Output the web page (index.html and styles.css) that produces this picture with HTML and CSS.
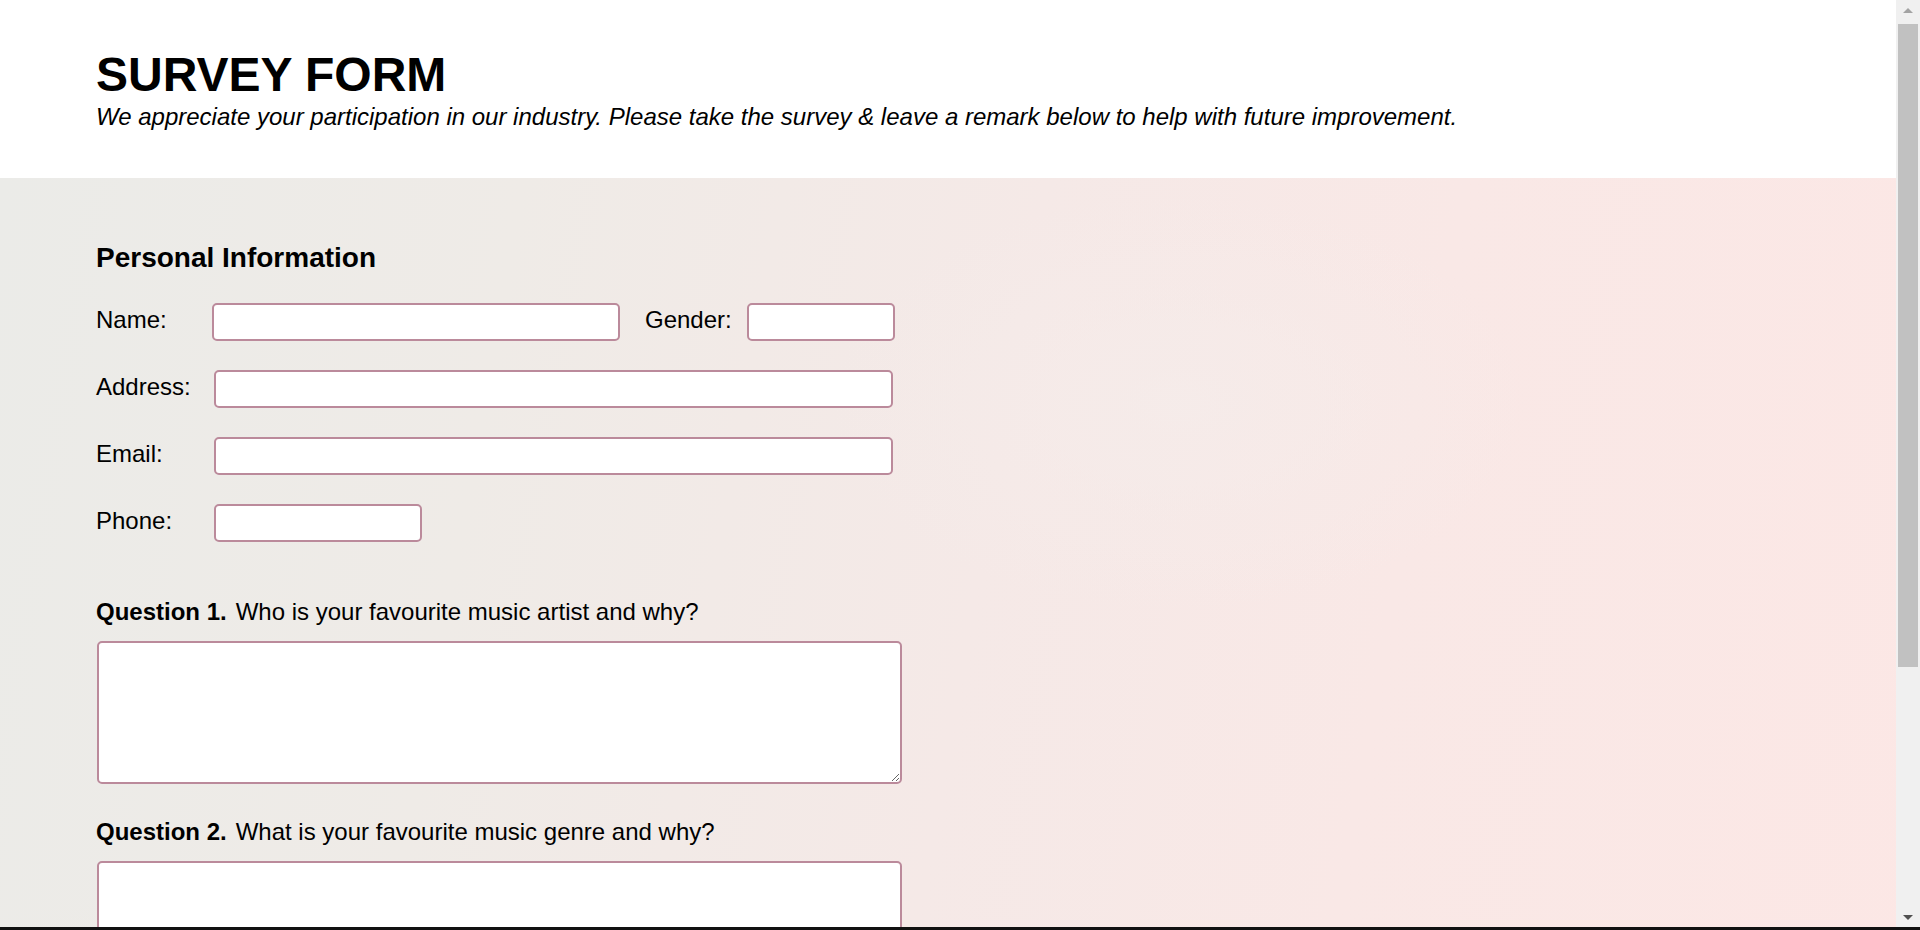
FILE: index.html
```html
<!DOCTYPE html>
<html lang="en">
<head>
<meta charset="utf-8">
<title>Survey Form</title>
<link rel="stylesheet" href="styles.css">
</head>
<body>
<header class="page-header">
  <h1 class="title">SURVEY FORM</h1>
  <p class="subtitle">We appreciate your participation in our industry. Please take the survey &amp; leave a remark below to help with future improvement.</p>
</header>
<main class="survey">
  <form class="form">
    <h3 class="section-title">Personal Information</h3>
    <div class="rows">
      <div class="row">
        <label class="label label-name" for="name">Name:</label>
        <input class="field field-name" id="name" type="text">
        <label class="label label-gender" for="gender">Gender:</label>
        <input class="field field-gender" id="gender" type="text">
      </div>
      <div class="row">
        <label class="label" for="address">Address:</label>
        <input class="field field-wide" id="address" type="text">
      </div>
      <div class="row">
        <label class="label" for="email">Email:</label>
        <input class="field field-wide" id="email" type="email">
      </div>
      <div class="row">
        <label class="label" for="phone">Phone:</label>
        <input class="field field-phone" id="phone" type="tel">
      </div>
    </div>
    <div class="question q-first">
      <p class="q-label"><strong class="q-num">Question 1.</strong>Who is your favourite music artist and why?</p>
      <textarea class="answer"></textarea>
    </div>
    <div class="question">
      <p class="q-label"><strong class="q-num">Question 2.</strong>What is your favourite music genre and why?</p>
      <textarea class="answer"></textarea>
    </div>
  </form>
</main>
<div class="scrollbar" aria-hidden="true">
  <span class="sb-arrow sb-up"></span>
  <span class="sb-thumb"></span>
  <span class="sb-arrow sb-down"></span>
</div>
<div class="bottom-edge"></div>
</body>
</html>
```

FILE: styles.css
```css
* { box-sizing: border-box; }

html, body {
  margin: 0;
  padding: 0;
}

body {
  font-family: "Liberation Sans", Arial, sans-serif;
  font-size: 24px;
  color: #000;
  background: #fbe8e5;
  padding-right: 24px;
}

.page-header {
  background: #fff;
  padding: 51px 96px 47px;
}

.title {
  margin: 0;
  font-size: 48px;
  line-height: 48px;
  font-weight: bold;
}

.subtitle {
  margin: 4px 0 0;
  font-size: 24px;
  line-height: 28px;
  font-style: italic;
}

.survey {
  padding: 64px 96px 300px;
  background:
    radial-gradient(ellipse 900px 500px at 10% 95%, rgba(240, 238, 224, 0.7), rgba(240, 238, 224, 0) 70%),
    radial-gradient(ellipse 500px 300px at 62% 20%, rgba(245, 236, 234, 0.8), rgba(245, 236, 234, 0) 70%),
    linear-gradient(100deg, #ebebe8 0%, #efebe7 25%, #f5e9e7 50%, #f9e8e6 70%, #fce7e5 100%);
}

.form {
  margin: 0;
}

.section-title {
  margin: 0;
  font-size: 28px;
  line-height: 32px;
  font-weight: bold;
}

.rows {
  margin-top: 29px;
  display: flex;
  flex-direction: column;
  gap: 29px;
}

.row {
  display: flex;
  align-items: flex-start;
}

.label {
  width: 118px;
  margin-top: 3px;
  line-height: 28px;
  flex: none;
}

.label-name {
  width: 116px;
}

.label-gender {
  width: auto;
  margin-left: 25px;
  margin-right: 15px;
}

.field {
  height: 38px;
  border: 2px solid #bb8a9b;
  border-radius: 5px;
  background: #fff;
  padding: 2px 6px;
  font-family: inherit;
  font-size: 16px;
  outline: none;
  flex: none;
}

.field-name { width: 408px; }
.field-gender { width: 148px; }
.field-wide { width: 679px; }
.field-phone { width: 208px; }

.question {
  margin-top: 34px;
}

.q-first {
  margin-top: 56px;
}

.q-label {
  margin: 0 0 15px;
  line-height: 28px;
}

.q-num {
  margin-right: 9px;
}

.answer {
  display: block;
  width: 805px;
  height: 143px;
  margin-left: 1px;
  border: 2px solid #bb8a9b;
  border-radius: 5px;
  background: #fff;
  font-family: inherit;
  font-size: 16px;
  outline: none;
}

.scrollbar {
  position: fixed;
  top: 0;
  right: 0;
  bottom: 0;
  width: 24px;
  background: #f0f0f0;
}

.sb-thumb {
  position: absolute;
  left: 2px;
  right: 2px;
  top: 24px;
  height: 643px;
  background: #c1c1c1;
}

.sb-arrow {
  position: absolute;
  left: 50%;
  width: 0;
  height: 0;
  margin-left: -5px;
  border-left: 5px solid transparent;
  border-right: 5px solid transparent;
}

.sb-up {
  top: 8px;
  border-bottom: 5px solid #a3a3a3;
}

.sb-down {
  bottom: 10px;
  border-top: 5px solid #505050;
}

.bottom-edge {
  position: fixed;
  left: 0;
  right: 0;
  bottom: 0;
  height: 3px;
  background: #111;
  z-index: 2;
}
```
